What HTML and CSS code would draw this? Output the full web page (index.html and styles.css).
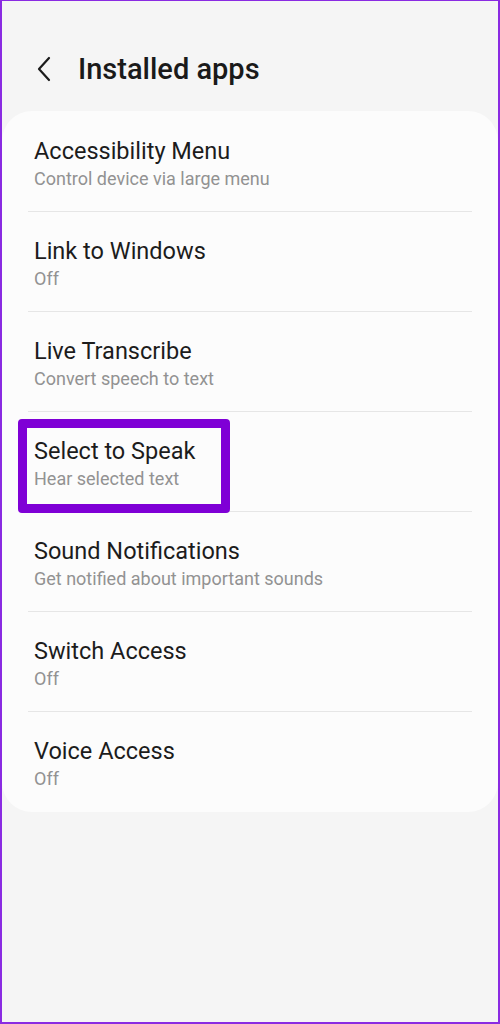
FILE: index.html
```html
<!DOCTYPE html>
<html>
<head>
<meta charset="utf-8">
<link rel="stylesheet" href="styles.css">
</head>
<body>
<div class="frame">
  <header class="topbar">
    <svg class="back" width="16" height="26" viewBox="0 0 16 26"><path d="M13 2 L3 13 L13 24" fill="none" stroke="#1c1c1c" stroke-width="2.2" stroke-linecap="round" stroke-linejoin="round"/></svg>
    <h1 class="title">Installed apps</h1>
  </header>
  <div class="card">
    <div class="row"><div class="name">Accessibility Menu</div><div class="sub">Control device via large menu</div></div>
    <div class="row"><div class="name">Link to Windows</div><div class="sub">Off</div></div>
    <div class="row"><div class="name">Live Transcribe</div><div class="sub">Convert speech to text</div></div>
    <div class="row"><div class="name">Select to Speak</div><div class="sub">Hear selected text</div><div class="mark"></div></div>
    <div class="row"><div class="name">Sound Notifications</div><div class="sub">Get notified about important sounds</div></div>
    <div class="row"><div class="name">Switch Access</div><div class="sub">Off</div></div>
    <div class="row last"><div class="name">Voice Access</div><div class="sub">Off</div></div>
  </div>
</div>
</body>
</html>
```
FILE: styles.css
```css
html, body { margin: 0; padding: 0; }
body {
  width: 500px;
  height: 1024px;
  font-family: Roboto, "Liberation Sans", sans-serif;
  background: #f5f5f5;
}
.frame {
  box-sizing: border-box;
  width: 500px;
  height: 1024px;
  border: 2px solid #8a2be2;
  border-top-width: 1px;
  background: #f5f5f5;
}
.topbar {
  display: flex;
  align-items: flex-start;
  height: 110px;
  padding: 51px 0 0 34px;
  box-sizing: border-box;
}
.back { margin-right: 26px; margin-top: 4px; }
.title {
  margin: 0;
  font-size: 29px;
  line-height: 34px;
  font-weight: 500;
  color: #1a1a1a;
}
.card {
  background: #fcfcfc;
  border-radius: 30px;
  padding: 1px 26px 0;
}
.row {
  position: relative;
  height: 100px;
  box-sizing: border-box;
  padding: 25px 0 0 6px;
  border-bottom: 1px solid #e6e6e6;
}
.row.last { border-bottom: none; }
.name {
  font-size: 23.5px;
  color: #1c1c1c;
  line-height: 28px;
}
.sub {
  font-size: 18px;
  color: #929292;
  line-height: 28px;
}
.mark {
  position: absolute;
  left: -10px;
  top: 7px;
  width: 212px;
  height: 94px;
  box-sizing: border-box;
  border: 9px solid #7f00d6;
  border-radius: 4px;
}
```
